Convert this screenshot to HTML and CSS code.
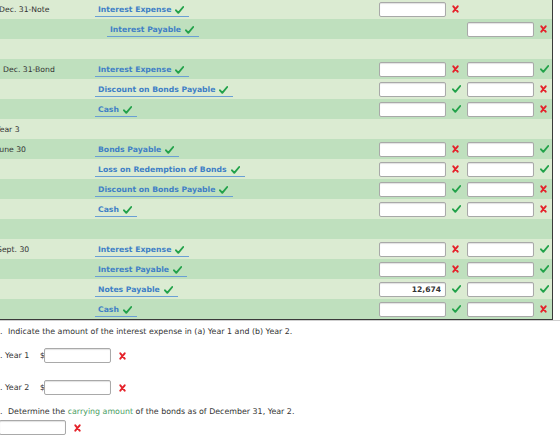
FILE: index.html
```html
<!DOCTYPE html>
<html lang="en">
<head>
    <meta charset="UTF-8">
    <meta name="viewport" content="width=device-width, initial-scale=1.0">
    <title>Journal Entries</title>
    <link rel="stylesheet" href="styles.css">
</head>
<body>

    <svg class="defs" width="0" height="0">
        <symbol id="ok" viewBox="0 0 9 8">
            <path d="M1 4.3 L3.3 6.8 L8.2 1" fill="none" stroke="#22a24a" stroke-width="1.9" stroke-linecap="round" stroke-linejoin="round"/>
        </symbol>
        <symbol id="bad" viewBox="0 0 7 8">
            <path d="M1.3 1.3 L5.7 6.7 M5.7 1.3 L1.3 6.7" fill="none" stroke="#e5232b" stroke-width="1.9" stroke-linecap="round"/>
        </symbol>
    </svg>

    <div class="sheet">
        <!-- Dec. 31 note -->
        <div class="row light">
            <div class="date">Dec. 31-Note</div>
            <div class="acct"><span class="link">Interest Expense <svg class="ok"><use href="#ok"/></svg></span></div>
            <div class="amt"><input type="text"><svg class="bad"><use href="#bad"/></svg></div>
            <div class="amt"></div>
        </div>
        <div class="row dark">
            <div class="date"></div>
            <div class="acct credit"><span class="link">Interest Payable <svg class="ok"><use href="#ok"/></svg></span></div>
            <div class="amt"></div>
            <div class="amt"><input type="text"><svg class="bad"><use href="#bad"/></svg></div>
        </div>
        <div class="row light"></div>

        <!-- Dec. 31 bond -->
        <div class="row dark">
            <div class="date d-bond">Dec. 31-Bond</div>
            <div class="acct"><span class="link">Interest Expense <svg class="ok"><use href="#ok"/></svg></span></div>
            <div class="amt"><input type="text"><svg class="bad"><use href="#bad"/></svg></div>
            <div class="amt"><input type="text"><svg class="ok"><use href="#ok"/></svg></div>
        </div>
        <div class="row light">
            <div class="date"></div>
            <div class="acct"><span class="link">Discount on Bonds Payable <svg class="ok"><use href="#ok"/></svg></span></div>
            <div class="amt"><input type="text"><svg class="ok"><use href="#ok"/></svg></div>
            <div class="amt"><input type="text"><svg class="bad"><use href="#bad"/></svg></div>
        </div>
        <div class="row dark">
            <div class="date"></div>
            <div class="acct"><span class="link">Cash <svg class="ok"><use href="#ok"/></svg></span></div>
            <div class="amt"><input type="text"><svg class="ok"><use href="#ok"/></svg></div>
            <div class="amt"><input type="text"><svg class="bad"><use href="#bad"/></svg></div>
        </div>

        <!-- Year 3 -->
        <div class="row light">
            <div class="date d-year">Year 3</div>
        </div>
        <div class="row dark">
            <div class="date d-june">June 30</div>
            <div class="acct"><span class="link">Bonds Payable <svg class="ok"><use href="#ok"/></svg></span></div>
            <div class="amt"><input type="text"><svg class="bad"><use href="#bad"/></svg></div>
            <div class="amt"><input type="text"><svg class="ok"><use href="#ok"/></svg></div>
        </div>
        <div class="row light">
            <div class="date"></div>
            <div class="acct"><span class="link">Loss on Redemption of Bonds <svg class="ok"><use href="#ok"/></svg></span></div>
            <div class="amt"><input type="text"><svg class="bad"><use href="#bad"/></svg></div>
            <div class="amt"><input type="text"><svg class="ok"><use href="#ok"/></svg></div>
        </div>
        <div class="row dark">
            <div class="date"></div>
            <div class="acct"><span class="link">Discount on Bonds Payable <svg class="ok"><use href="#ok"/></svg></span></div>
            <div class="amt"><input type="text"><svg class="ok"><use href="#ok"/></svg></div>
            <div class="amt"><input type="text"><svg class="bad"><use href="#bad"/></svg></div>
        </div>
        <div class="row light">
            <div class="date"></div>
            <div class="acct"><span class="link">Cash <svg class="ok"><use href="#ok"/></svg></span></div>
            <div class="amt"><input type="text"><svg class="ok"><use href="#ok"/></svg></div>
            <div class="amt"><input type="text"><svg class="bad"><use href="#bad"/></svg></div>
        </div>
        <div class="row dark"></div>

        <!-- Sept. 30 -->
        <div class="row light">
            <div class="date d-sept">Sept. 30</div>
            <div class="acct"><span class="link">Interest Expense <svg class="ok"><use href="#ok"/></svg></span></div>
            <div class="amt"><input type="text"><svg class="bad"><use href="#bad"/></svg></div>
            <div class="amt"><input type="text"><svg class="ok"><use href="#ok"/></svg></div>
        </div>
        <div class="row dark">
            <div class="date"></div>
            <div class="acct"><span class="link">Interest Payable <svg class="ok"><use href="#ok"/></svg></span></div>
            <div class="amt"><input type="text"><svg class="bad"><use href="#bad"/></svg></div>
            <div class="amt"><input type="text"><svg class="ok"><use href="#ok"/></svg></div>
        </div>
        <div class="row light">
            <div class="date"></div>
            <div class="acct"><span class="link">Notes Payable <svg class="ok"><use href="#ok"/></svg></span></div>
            <div class="amt"><input type="text" value="12,674"><svg class="ok"><use href="#ok"/></svg></div>
            <div class="amt"><input type="text"><svg class="ok"><use href="#ok"/></svg></div>
        </div>
        <div class="row dark">
            <div class="date"></div>
            <div class="acct"><span class="link">Cash <svg class="ok"><use href="#ok"/></svg></span></div>
            <div class="amt"><input type="text"><svg class="ok"><use href="#ok"/></svg></div>
            <div class="amt"><input type="text"><svg class="bad"><use href="#bad"/></svg></div>
        </div>
    </div>

    <div class="questions">
        <p class="q"><span class="num">.</span>Indicate the amount of the interest expense in (a) Year 1 and (b) Year 2.</p>

        <div class="answer">
            <span class="label">. Year 1</span>
            <span class="dollar">$</span>
            <input type="text">
            <svg class="bad"><use href="#bad"/></svg>
        </div>

        <div class="answer second">
            <span class="label">. Year 2</span>
            <span class="dollar">$</span>
            <input type="text">
            <svg class="bad"><use href="#bad"/></svg>
        </div>

        <p class="q q-carry"><span class="num">.</span>Determine the <span class="term">carrying amount</span> of the bonds as of December 31, Year 2.</p>

        <div class="answer plain">
            <input type="text">
            <svg class="bad"><use href="#bad"/></svg>
        </div>
    </div>

</body>
</html>
```

FILE: styles.css
```css
body {
    margin: 0;
    font-family: "DejaVu Sans", Verdana, sans-serif;
    font-size: 7.7px;
    color: #333;
    background-color: #fff;
    overflow: hidden;
}
.defs {
    position: absolute;
}
.sheet {
    width: 552px;
    margin-top: -1px;
    border-right: 1px solid #3a3a3a;
    border-bottom: 1px solid #3a3a3a;
}
.row {
    display: grid;
    grid-template-columns: 95px 280px 88px 89px;
    align-items: center;
    height: 20px;
}
.light {
    background-color: #dbebd2;
}
.dark {
    background-color: #bfe0be;
}
.date {
    margin-left: -1px;
    white-space: nowrap;
}
.d-bond {
    margin-left: 3px;
}
.d-year {
    margin-left: -4px;
}
.d-june {
    margin-left: -3px;
}
.d-sept {
    margin-left: -3px;
}
.acct {
    display: flex;
}
.credit {
    padding-left: 12px;
}
.link {
    display: inline-flex;
    align-items: center;
    gap: 4px;
    height: 13px;
    margin-top: 2px;
    padding: 0 5px 0 3px;
    border-bottom: 1px solid #6a9fd4;
    color: #3f7fc6;
    font-weight: bold;
    font-size: 7.7px;
    white-space: nowrap;
}
.amt {
    display: flex;
    align-items: center;
    gap: 6px;
    padding-left: 4px;
}
input {
    box-sizing: border-box;
    width: 67px;
    height: 15px;
    margin: 0;
    padding: 0 4px;
    border: 1px solid #a9a9a9;
    border-radius: 2px;
    background-color: #fff;
    box-shadow: inset 0 1px 1px rgba(0, 0, 0, 0.12);
    font-family: "DejaVu Sans", Verdana, sans-serif;
    font-size: 7.6px;
    font-weight: bold;
    color: #333;
    text-align: right;
}
svg.ok {
    width: 9px;
    height: 8px;
}
svg.bad {
    width: 7px;
    height: 8px;
}
.questions {
    border-top: 1px solid #cfcfcf;
    padding-top: 5px;
    font-size: 7.9px;
}
.q {
    margin: 0;
    line-height: 12px;
    white-space: nowrap;
}
.q .num {
    display: inline-block;
    width: 8px;
}
.term {
    color: #4a9e63;
}
.answer {
    display: flex;
    align-items: center;
    height: 15px;
    margin-top: 10px;
}
.answer .label {
    width: 40px;
}
.answer .dollar {
    width: 4px;
}
.answer svg.bad {
    margin-left: 8px;
}
.second {
    margin-top: 17px;
}
.q-carry {
    margin-top: 11px;
}
.plain {
    margin-top: 2px;
    margin-left: -1px;
}
```
